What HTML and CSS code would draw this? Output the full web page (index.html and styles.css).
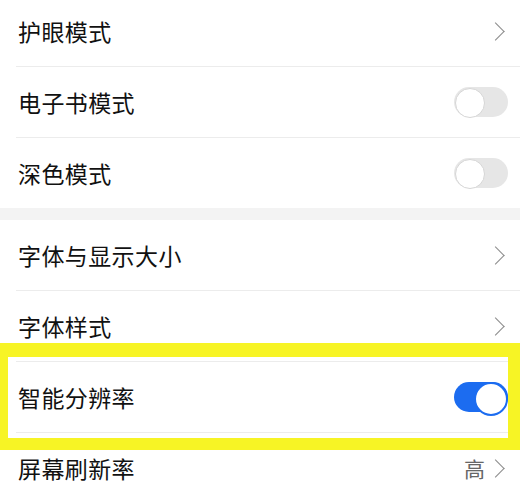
FILE: index.html
```html
<!DOCTYPE html>
<html lang="zh-CN">
  <head>
    <meta charset="UTF-8" />
    <meta name="viewport" content="width=device-width, initial-scale=1.0" />
    <title>显示设置</title>
    <link rel="stylesheet" href="styles.css">
  </head>
  <body>
    <div class="page">
      <div class="group">
        <div class="row">
          <span class="label">护眼模式</span>
          <span class="chevron"></span>
        </div>
        <div class="row">
          <span class="label">电子书模式</span>
          <span class="switch"></span>
        </div>
        <div class="row">
          <span class="label">深色模式</span>
          <span class="switch"></span>
        </div>
      </div>

      <div class="gap"></div>

      <div class="group">
        <div class="row">
          <span class="label">字体与显示大小</span>
          <span class="chevron"></span>
        </div>
        <div class="row">
          <span class="label">字体样式</span>
          <span class="chevron"></span>
        </div>
        <div class="row">
          <span class="label">智能分辨率</span>
          <span class="switch on"></span>
        </div>
        <div class="row">
          <span class="label">屏幕刷新率</span>
          <span class="value">高<span class="chevron"></span></span>
        </div>
      </div>

      <!-- 标注框 -->
      <div class="highlight"></div>
    </div>
  </body>
</html>
```

FILE: styles.css
```css
* {
  margin: 0;
  padding: 0;
  box-sizing: border-box;
}

body {
  font-family: 'Noto Sans CJK SC', 'Noto Sans', sans-serif;
  background: white;
  color: #111;
  overflow: hidden;
}

.page {
  position: relative;
  margin-top: -4px;
}

.row {
  height: 71px;
  margin-left: 16px;
  padding: 0 12px 0 2px;
  display: flex;
  align-items: center;
  justify-content: space-between;
  border-bottom: 1px solid #ececec;
}

.group .row:last-child {
  border-bottom: none;
  height: 70px;
}

.label {
  font-size: 23px;
  letter-spacing: 0.4px;
}

.gap {
  height: 12px;
  background: #f3f3f3;
}

.chevron {
  display: inline-block;
  width: 13px;
  height: 13px;
  border-top: 1.6px solid #8a8a8a;
  border-right: 1.6px solid #8a8a8a;
  transform: rotate(45deg);
  margin-right: 6px;
}

.value {
  display: flex;
  align-items: center;
  gap: 4px;
  font-size: 21px;
  color: #666;
}

.switch {
  position: relative;
  width: 54px;
  height: 30px;
  border-radius: 15px;
  background: #e6e6e6;
}

.switch::after {
  content: '';
  position: absolute;
  top: 1px;
  left: 1px;
  width: 28px;
  height: 28px;
  border-radius: 50%;
  background: white;
  border: 1px solid #d6d6d6;
}

.switch.on {
  background: #1c6cf0;
}

.switch.on::after {
  top: 0;
  left: auto;
  right: 0;
  width: 30px;
  height: 30px;
  border: 2px solid #1c6cf0;
}

.highlight {
  position: absolute;
  left: 0;
  top: 347px;
  width: 520px;
  height: 107px;
  border-style: solid;
  border-color: #f7f425;
  border-width: 14px 12px 12px 8px;
}
```
